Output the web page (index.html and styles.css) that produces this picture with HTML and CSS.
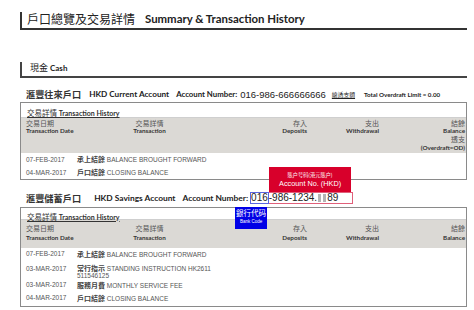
FILE: index.html
```html
<!DOCTYPE html>
<html lang="zh-Hant">
<head>
<meta charset="utf-8">
<title>Summary &amp; Transaction History</title>
<link rel="stylesheet" href="styles.css">
</head>
<body>
<div class="page">
  <div class="title"><span class="zh">戶口總覽及交易詳情</span><span class="en">Summary &amp; Transaction History</span></div>

  <div class="section"><span class="zh">現金</span><span class="en">Cash</span></div>

  <div class="acct">
    <span class="zh acct-zh">滙豐往來戶口</span>
    <span class="en acct-name">HKD Current Account</span>
    <span class="en acct-label">Account Number:</span>
    <span class="num">016-986-666666666</span>
    <span class="zh od-zh">總透支額</span>
    <span class="en od-en">Total Overdraft Limit = 0.00</span>
  </div>

  <div class="box">
    <div class="th"><span class="th-link"><span class="zh">交易詳情</span> Transaction History</span></div>
    <div class="hdr">
      <div class="cell"><span class="zh">交易日期</span><b>Transaction Date</b></div>
      <div class="cell center"><span class="zh">交易詳情</span><b>Transaction</b></div>
      <div class="cell right"><span class="zh">存入</span><b>Deposits</b></div>
      <div class="cell right"><span class="zh">支出</span><b>Withdrawal</b></div>
      <div class="cell right"><span class="zh">結餘</span><b>Balance</b><span class="zh">透支</span><b>(Overdraft=OD)</b></div>
    </div>
    <div class="rows">
      <div class="row"><span>07-FEB-2017</span><span><span class="zh">承上結餘</span> BALANCE BROUGHT FORWARD</span></div>
      <div class="row"><span>04-MAR-2017</span><span><span class="zh">戶口結餘</span> CLOSING BALANCE</span></div>
    </div>
  </div>

  <div class="acct acct-2">
    <span class="zh acct-zh">滙豐儲蓄戶口</span>
    <span class="en acct-name">HKD Savings Account</span>
    <span class="en acct-label">Account Number:</span>
    <span class="acno">
      <span class="bank-code">016</span><span class="acct-part">-986-1234.<i class="mask"></i><i class="mask"></i>89</span>
      <span class="callout callout-red"><span class="zh c-small">賬户号码(港元賬户)</span><span class="c-big">Account No. (HKD)</span></span>
      <span class="callout callout-blue"><span class="zh c-mid">銀行代码</span><span class="c-tiny">Bank Code</span></span>
    </span>
  </div>

  <div class="box box-2">
    <div class="th"><span class="th-link"><span class="zh">交易詳情</span> Transaction History</span></div>
    <div class="hdr">
      <div class="cell"><span class="zh">交易日期</span><b>Transaction Date</b></div>
      <div class="cell center"><span class="zh">交易詳情</span><b>Transaction</b></div>
      <div class="cell right"><span class="zh">存入</span><b>Deposits</b></div>
      <div class="cell right"><span class="zh">支出</span><b>Withdrawal</b></div>
      <div class="cell right"><span class="zh">結餘</span><b>Balance</b></div>
    </div>
    <div class="rows">
      <div class="row"><span>07-FEB-2017</span><span><span class="zh">承上結餘</span> BALANCE BROUGHT FORWARD</span></div>
      <div class="row tall"><span>03-MAR-2017</span><span><span class="zh">常行指示</span> STANDING INSTRUCTION HK2611<br>511546125</span></div>
      <div class="row"><span>03-MAR-2017</span><span><span class="zh">服務月費</span> MONTHLY SERVICE FEE</span></div>
      <div class="row"><span>04-MAR-2017</span><span><span class="zh">戶口結餘</span> CLOSING BALANCE</span></div>
    </div>
  </div>
</div>
</body>
</html>
```

FILE: styles.css
```css
* { box-sizing: border-box; margin: 0; padding: 0; }

html, body { overflow: hidden; }

body {
  margin: 0;
  background: #fff;
  color: #222;
  font-family: "Lato", "Noto Sans CJK TC", sans-serif;
}

.zh { font-family: "Noto Sans CJK TC", sans-serif; }

.page {
  padding: 12px 0 0 20px;
  width: 467px;
}

/* page title */
.title {
  height: 18px;
  line-height: 13px;
  border-left: 2px solid #333;
  border-bottom: 2px solid #333;
  padding-left: 5px;
  display: flex;
  align-items: flex-start;
  white-space: nowrap;
}
.title .zh { font-size: 12px; color: #222; }
.title .en { font-size: 11.4px; font-weight: 700; margin-left: 10px; }

/* Cash section heading */
.section {
  margin-top: 32px;
  height: 16px;
  line-height: 12px;
  border-left: 2px solid #444;
  border-bottom: 2px solid #444;
  padding-left: 8px;
  display: flex;
  white-space: nowrap;
}
.section .zh { font-size: 9px; }
.section .en { font-size: 8px; font-weight: 700; margin-left: 2px; }

/* account header line */
.acct {
  margin-top: 10px;
  margin-bottom: 2px;
  height: 12px;
  padding-left: 6px;
  display: flex;
  align-items: center;
  white-space: nowrap;
}
.acct-zh { font-size: 9.2px; font-weight: 700; color: #333; }
.acct-name { font-size: 8.2px; font-weight: 700; margin-left: 8px; }
.acct-label { font-size: 7.8px; font-weight: 700; margin-left: 7px; }
.num {
  font-family: "Liberation Sans", sans-serif;
  font-size: 9.5px;
  margin-left: 3px;
}
.od-zh { font-size: 5.8px; margin-left: 6px; text-decoration: underline; }
.od-en { font-size: 6.2px; font-weight: 700; margin-left: 9px; }

.acct-2 { margin-top: 12px; margin-bottom: 3px; }
.acct-2 .acct-name { margin-left: 13px; font-size: 8.4px; }
.acct-2 .acct-label { margin-left: 7px; font-size: 8.4px; }

/* account number with annotations */
.acno {
  position: relative;
  display: inline-flex;
  height: 12px;
  margin-left: 2px;
  font-family: "Liberation Sans", sans-serif;
  font-size: 10px;
  line-height: 10px;
}
.bank-code {
  border: 1px solid #5a66e0;
  padding: 0;
}
.acct-part {
  border: 1px solid #e0607a;
  border-left: 0;
  width: 84px;
  display: inline-flex;
  align-items: center;
}
.mask {
  display: inline-block;
  width: 3px;
  height: 8px;
  background: #b4b4b4;
  margin: 0 1px;
}
.callout {
  position: absolute;
  display: flex;
  flex-direction: column;
  align-items: center;
  color: #fff;
  white-space: nowrap;
}
.callout-red {
  left: 19px;
  bottom: 100%;
  width: 82px;
  height: 25px;
  background: #d8002b;
  padding-top: 4px;
}
.c-small { font-size: 5.2px; line-height: 7px; }
.c-big { font-size: 7.3px; line-height: 12px; font-family: "Liberation Sans", sans-serif; }
.callout-blue {
  left: -15px;
  top: 15px;
  width: 32px;
  height: 22px;
  background: #0000e6;
  padding-top: 1px;
}
.c-mid { font-size: 7.5px; line-height: 9px; }
.c-tiny { font-size: 4.5px; line-height: 9px; font-family: "Liberation Sans", sans-serif; }

/* transaction box */
.box {
  border: 1px solid #8a8a8a;
}
.th {
  height: 15px;
  line-height: 14px;
  padding-left: 6px;
  border-bottom: 1px solid #cfcfcf;
}
.th-link {
  font-size: 7px;
  font-weight: 700;
  color: #333;
  text-decoration: underline;
}
.th-link .zh { font-weight: 400; font-size: 7.5px; }

.hdr {
  display: grid;
  grid-template-columns: 51px 145px 85px 72px 86px;
  padding: 0.5px 1px 0 5px;
  height: 34.5px;
  line-height: 8.4px;
  background: #dbd9d5;
}
.cell { display: flex; flex-direction: column; align-items: flex-start; white-space: nowrap; min-width: 0; }
.cell.center { align-items: center; }
.cell.right { align-items: flex-end; }
.cell .zh { font-size: 7px; color: #555; }
.cell b { font-size: 6.3px; font-weight: 700; color: #333; }

.rows { padding-left: 5px; }
.row {
  display: grid;
  grid-template-columns: 51px minmax(0, 1fr);
  line-height: 13px;
  font-family: "Liberation Sans", sans-serif;
  font-size: 6.5px;
  color: #555;
  white-space: nowrap;
}
.row .zh { font-size: 7px; font-weight: 700; color: #444; }

.box-2 .th { height: 12px; line-height: 11px; }
.box-2 .hdr { height: 28.5px; padding-top: 4.5px; line-height: 9px; }
.box-2 .row { line-height: 12.5px; }
.box-2 .row.tall { line-height: 7px; padding-top: 3px; }
```
